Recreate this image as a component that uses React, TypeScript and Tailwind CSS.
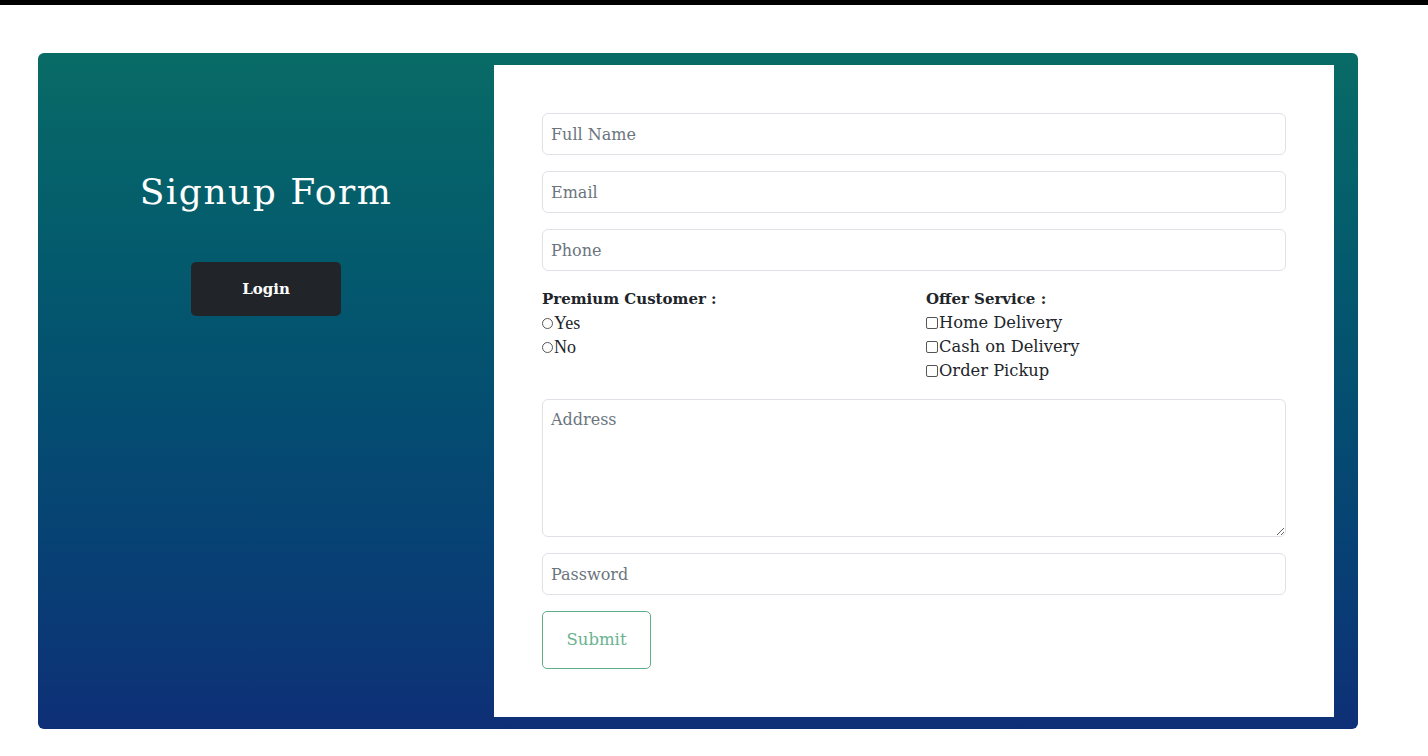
import React from "react";

const serif = "font-['DejaVu_Serif','Liberation_Serif',serif]";

function Field({ placeholder }: { placeholder: string }) {
  return (
    <input
      placeholder={placeholder}
      className={`block w-full h-[42px] rounded-[6px] border border-[#dee2e6] bg-white px-[8px] text-[16px] text-[#212529] placeholder:text-[#6c757d] outline-none ${serif}`}
    />
  );
}

function Radio({ label }: { label: string }) {
  return (
    <label className="flex items-center h-[24px] text-[18px] text-[#212529] font-['Liberation_Serif',serif]">
      <span className="inline-block w-[11px] h-[11px] rounded-full border border-[#555] mr-[1px]" />
      {label}
    </label>
  );
}

function Check({ label }: { label: string }) {
  return (
    <label className={`flex items-center h-[24px] text-[16.3px] text-[#212529] ${serif}`}>
      <span className="inline-block w-[12px] h-[12px] rounded-[2px] border border-[#555] mr-[1px]" />
      {label}
    </label>
  );
}

export default function App() {
  return (
    <div className="min-h-[756px] bg-white">
      <div className="h-[5px] bg-black" />
      <div className="px-[38px] pt-[48px] pr-[70px]">
        <div className="flex rounded-[6px] bg-gradient-to-b from-[#096b66] to-[#0e2f77] h-[676px]">
          <div className="w-[456px] flex flex-col items-center pt-[114px]">
            <h1 className={`text-[36px] leading-[50px] tracking-[1.5px] text-white ${serif}`}>Signup Form</h1>
            <button className={`mt-[45px] w-[150px] h-[54px] rounded-[5px] bg-[#212529] text-white text-[15px] font-bold ${serif}`}>
              Login
            </button>
          </div>
          <div className="flex-1 mr-[24px] my-[12px] bg-white px-[48px] pt-[48px]">
            <div className="flex flex-col gap-[16px]">
              <Field placeholder="Full Name" />
              <Field placeholder="Email" />
              <Field placeholder="Phone" />
              <div className="flex">
                <div className="w-[384px]">
                  <div className={`h-[24px] text-[15px] leading-[24px] font-bold text-[#212529] ${serif}`}>Premium Customer :</div>
                  <Radio label="Yes" />
                  <Radio label="No" />
                </div>
                <div>
                  <div className={`h-[24px] text-[15px] leading-[24px] font-bold text-[#212529] ${serif}`}>Offer Service :</div>
                  <Check label="Home Delivery" />
                  <Check label="Cash on Delivery" />
                  <Check label="Order Pickup" />
                </div>
              </div>
              <textarea
                placeholder="Address"
                className={`block w-full h-[138px] rounded-[6px] border border-[#dee2e6] px-[8px] pt-[8px] pb-[6px] text-[16px] placeholder:text-[#6c757d] outline-none ${serif}`}
              />
              <Field placeholder="Password" />
              <div>
                <button className={`w-[109px] h-[58px] rounded-[5px] border border-[#5fae87] text-[#6ab38f] text-[16.5px] ${serif}`}>
                  Submit
                </button>
              </div>
            </div>
          </div>
        </div>
      </div>
    </div>
  );
}
